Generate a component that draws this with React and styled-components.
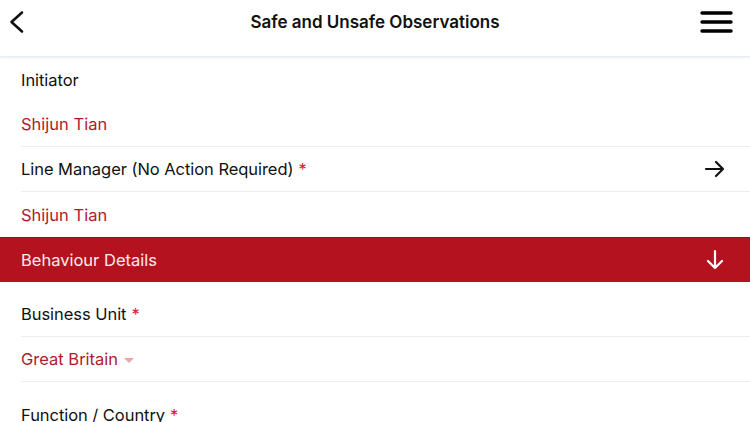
import React from "react";
import styled, { createGlobalStyle } from "styled-components";

const Global = createGlobalStyle`
  html, body { margin: 0; padding: 0; background: #fff; }
  body { font-family: Inter, "Noto Sans", sans-serif; -webkit-font-smoothing: antialiased; }
`;

const Page = styled.div`
  width: 750px;
  height: 422px;
  overflow: hidden;
  background: #fff;
`;

const Header = styled.header`
  height: 57px;
  display: flex;
  align-items: flex-start;
  justify-content: space-between;
  padding: 5px 16px 0 8px;
  box-sizing: border-box;
  border-bottom: 1px solid #e8ecf3;
  box-shadow: 0 1px 2px rgba(200, 210, 230, 0.4);
  position: relative;
`;

const Title = styled.h1`
  position: absolute;
  left: 0;
  right: 0;
  top: 12px;
  margin: 0;
  line-height: 20px;
  text-align: center;
  font-size: 17px;
  font-weight: 600;
  color: #111;
  pointer-events: none;
`;

const IconBtn = styled.button`
  border: 0;
  background: none;
  padding: 0;
  width: ${(p) => p.$w || 34}px;
  height: 34px;
  display: flex;
  align-items: center;
  justify-content: center;
`;

const Row = styled.div`
  height: 45px;
  margin-left: 21px;
  padding-right: 24px;
  display: flex;
  align-items: center;
  justify-content: space-between;
  border-bottom: ${(p) => (p.$line ? "1px solid #eeeeee" : "0")};
  margin-top: ${(p) => (p.$gap ? "10px" : "0")};
  box-sizing: border-box;
`;

const Label = styled.span`
  font-size: 16.5px;
  color: #111;
  letter-spacing: -0.05px;
`;

const Value = styled.span`
  font-size: 16.5px;
  color: #b01a2c;
  display: inline-flex;
  align-items: center;
`;

const Star = styled.span`
  color: #e0192c;
  margin-left: 5px;
`;

const Caret = styled.span`
  display: inline-block;
  width: 0;
  height: 0;
  border-left: 5px solid transparent;
  border-right: 5px solid transparent;
  border-top: 5px solid #e8a7b0;
  margin-left: 6px;
  margin-top: 2px;
`;

const Band = styled.div`
  height: 45px;
  background: #b5121f;
  border-top: 1px solid #9e0f1b;
  box-sizing: border-box;
  display: flex;
  align-items: center;
  justify-content: space-between;
  padding: 0 26px 0 21px;
  color: #fbeaec;
  font-size: 16.5px;
`;

export default function App() {
  return (
    <Page>
      <Global />
      <Header>
        <IconBtn aria-label="back" $w={18}>
          <svg width="18" height="24" viewBox="0 0 18 24">
            <path d="M14 2.5 L3.5 12 L14 21.5" fill="none" stroke="#111" strokeWidth="2.6" strokeLinecap="round" strokeLinejoin="round" />
          </svg>
        </IconBtn>
        <Title>Safe and Unsafe Observations</Title>
        <IconBtn aria-label="menu">
          <svg width="34" height="24" viewBox="0 0 34 24">
            <path d="M2 3 H31 M2 12 H31 M2 21 H31" stroke="#000" strokeWidth="3.4" strokeLinecap="round" />
          </svg>
        </IconBtn>
      </Header>

      <Row><Label>Initiator</Label></Row>
      <Row $line><Value>Shijun Tian</Value></Row>
      <Row $line>
        <Label>Line Manager (No Action Required)<Star>*</Star></Label>
        <svg width="22" height="18" viewBox="0 0 22 18">
          <path d="M2 9 H19 M12 2 L19 9 L12 16" fill="none" stroke="#111" strokeWidth="2.2" strokeLinecap="round" strokeLinejoin="round" />
        </svg>
      </Row>
      <Row><Value>Shijun Tian</Value></Row>
      <Band>
        <span>Behaviour Details</span>
        <svg width="18" height="22" viewBox="0 0 18 22">
          <path d="M9 2 V19 M2 12 L9 19 L16 12" fill="none" stroke="#fff" strokeWidth="2.2" strokeLinecap="round" strokeLinejoin="round" />
        </svg>
      </Band>
      <Row $gap $line><Label>Business Unit<Star>*</Star></Label></Row>
      <Row $line><Value>Great Britain<Caret /></Value></Row>
      <Row $gap><Label>Function / Country<Star>*</Star></Label></Row>
    </Page>
  );
}
